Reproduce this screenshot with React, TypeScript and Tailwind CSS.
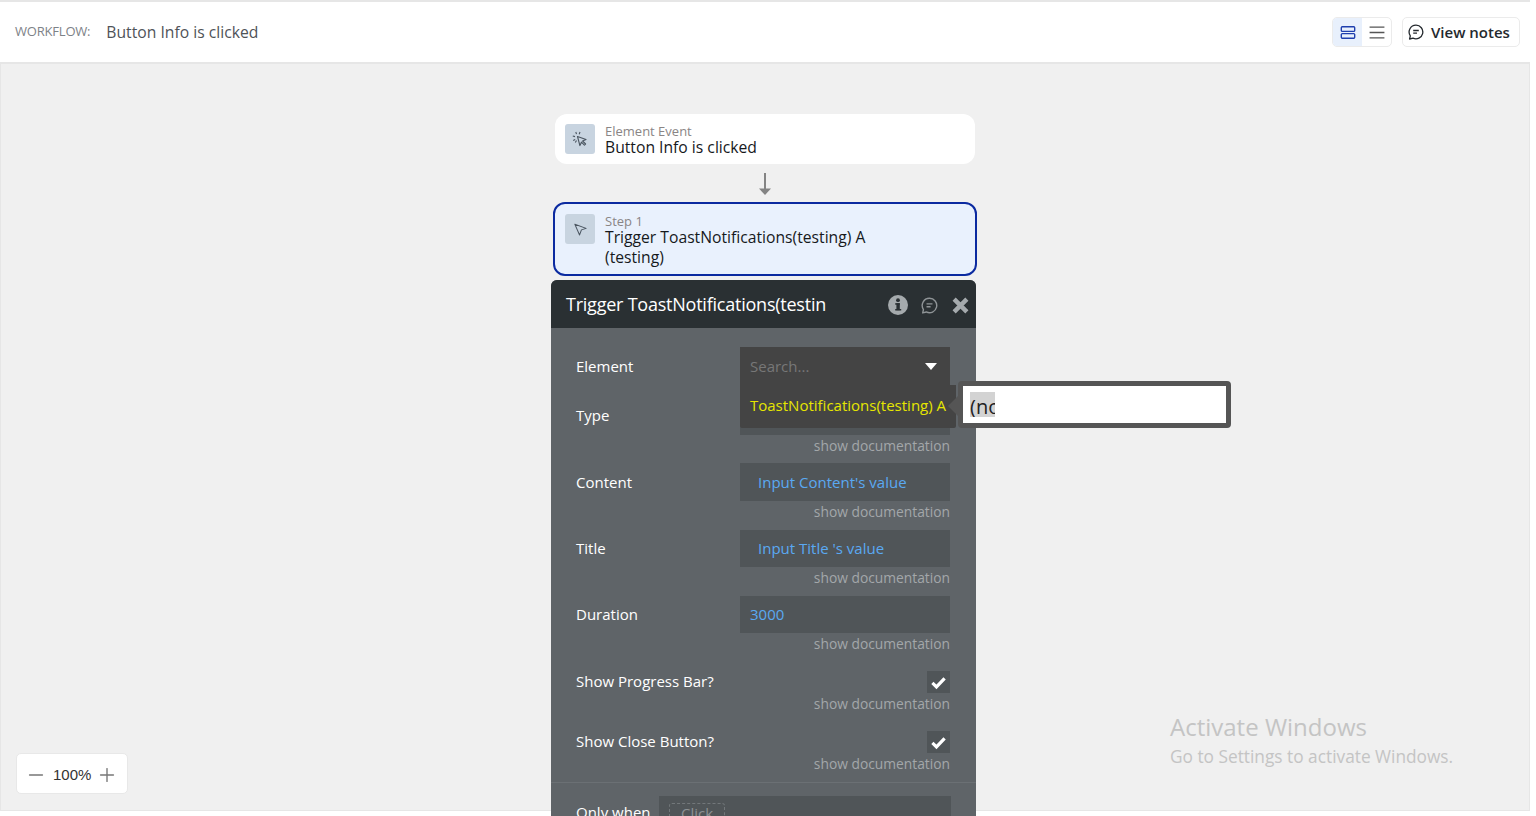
import { Minus, Plus } from 'lucide-react';

function NoteIcon({ className }: { className?: string }) {
  return (
    <svg viewBox="0 0 16 16" fill="none" stroke="currentColor" strokeWidth="1.3" className={className}>
      <path d="M8 1.2a6.8 6.8 0 1 1-3 12.9l-3.4.9.7-3.2A6.8 6.8 0 0 1 8 1.2z" strokeLinejoin="round" />
      <path d="M5.2 6.5h5.6M5.2 9.2h3.8" />
    </svg>
  );
}

function Doc() {
  return <div className="mt-px text-right text-[13.8px] leading-[20px] text-[#a3a7aa]">show documentation</div>;
}

function FieldRow({ label, value, field, mb }: { label: string; value: string; field: string; mb: string }) {
  return (
    <div className={mb}>
      <div className="flex items-center justify-between">
        <span className="text-[15px] text-white">{label}</span>
        <div className={`flex w-[210px] items-center bg-[#505558] text-[15px] text-[#5aa9f2] ${field}`}>{value}</div>
      </div>
      <Doc />
    </div>
  );
}

function CheckRow({ label, mb }: { label: string; mb: string }) {
  return (
    <div className={mb}>
      <div className="flex h-[22px] items-center justify-between">
        <span className="-mt-[2px] text-[15px] text-white">{label}</span>
        <div className="flex h-[22px] w-[23px] items-center justify-center bg-[#505558]">
          <svg viewBox="0 0 16 16" className="h-[15px] w-[15px]" fill="none" stroke="white" strokeWidth="3.4">
            <path d="M1.5 8.5l4.3 4.2L14.5 3.5" />
          </svg>
        </div>
      </div>
      <Doc />
    </div>
  );
}

export default function App() {
  return (
    <div className="h-[816px] w-[1536px] overflow-hidden bg-white font-['Open_Sans',sans-serif]">
      {/* top bar */}
      <header className="flex h-[62px] w-[1530px] items-center border-t-2 border-[#e6e6e6] pl-[15px] pr-[10px]">
        <span className="mr-[16px] text-[13px] tracking-[-0.2px] text-[#7d8287]">WORKFLOW:</span>
        <span className="mt-[2px] text-[15.7px] text-[#4f5358]">Button Info is clicked</span>
        <div className="ml-auto flex items-center gap-[10px]">
          <div className="flex h-[30px] overflow-hidden rounded-[5px] border border-[#ebebeb]">
            <div className="flex w-[29px] items-center justify-center bg-[#e8f0fc] text-[#1f3fae]">
              <svg viewBox="0 0 16 14" className="h-[13px] w-[16px]" fill="none" stroke="currentColor" strokeWidth="1.5">
                <rect x="0.8" y="0.8" width="14.4" height="5" rx="1" />
                <rect x="0.8" y="8.2" width="14.4" height="5" rx="1" />
              </svg>
            </div>
            <div className="flex w-[29px] items-center justify-center text-[#555]">
              <svg viewBox="0 0 16 14" className="h-[13px] w-[16px]" stroke="currentColor" strokeWidth="1.5">
                <path d="M0 1.2h16M0 7h16M0 12.8h16" />
              </svg>
            </div>
          </div>
          <div className="flex h-[30px] w-[118px] items-center gap-[7px] rounded-[5px] border border-[#ebebeb] pl-[5px] text-[15px] font-semibold text-[#24292e]">
            <NoteIcon className="h-[16px] w-[16px]" />
            View notes
          </div>
        </div>
      </header>

      {/* canvas */}
      <main className="relative h-[749px] w-[1530px] border-x border-b border-t-2 border-[#e6e6e6] bg-[#f0f0f0] pl-[550px] pt-[50px]">
        <div className="ml-[4px] flex h-[50px] w-[420px] items-center rounded-[12px] bg-white pl-[10px]">
          <div className="flex h-[30px] w-[30px] items-center justify-center rounded-[3px] bg-[#c8d4e0] text-[#4a5560]">
            <svg viewBox="0 0 16 16" className="h-[16px] w-[16px]" fill="none" stroke="currentColor" strokeWidth="1.1">
              <path d="M5.5 5.5l8.5 3-3.4 1.5 3 3-1.2 1.2-3-3-1.5 3.4z" strokeLinejoin="round" />
              <path d="M3.8 1l.7 2.2M8 1l-.8 2.2M.8 5l2.2.6M1.2 9.5l2-1M4.5 9.5l-1.2 2" />
            </svg>
          </div>
          <div className="ml-[10px] mt-[2px] flex flex-col">
            <span className="text-[13px] leading-[14px] text-[#8a8585]">Element Event</span>
            <span className="text-[15.7px] leading-[18px] font-medium text-[#16191c]">Button Info is clicked</span>
          </div>
        </div>

        <div className="ml-[208px] flex h-[38px] w-[12px] items-center justify-center">
          <svg viewBox="0 0 12 22" className="mt-[2px] h-[22px] w-[12px]" fill="#848484">
            <rect x="5" y="0" width="2" height="18" />
            <path d="M0 15.5h12L6 22z" />
          </svg>
        </div>

        <div className="ml-[2px] flex h-[74px] w-[424px] rounded-[12px] border-2 border-[#0b2aa0] bg-[#e9f1fd] pl-[10px] pt-[10px]">
          <div className="flex h-[30px] w-[30px] items-center justify-center rounded-[3px] bg-[#c8d4e0] text-[#4a5560]">
            <svg viewBox="0 0 16 16" className="h-[15px] w-[15px]" fill="none" stroke="currentColor" strokeWidth="1.1">
              <path d="M2 2.5l12 4.3-5 1.6-2 5.4z" strokeLinejoin="round" />
            </svg>
          </div>
          <div className="ml-[10px] mt-px w-[290px]">
            <div className="text-[13px] leading-[12px] text-[#8a8585]">Step 1</div>
            <div className="text-[15.7px] leading-[20px] font-medium text-[#16191c]">Trigger ToastNotifications(testing) A (testing)</div>
          </div>
        </div>

        {/* property editor */}
        <section className="mt-[4px] h-[560px] w-[425px] overflow-hidden rounded-t-[6px] bg-[#5f6468]">
          <div className="flex h-[48px] items-center bg-[#2a3033] pl-[15px] pr-[7px]">
            <span className="text-[18px] tracking-[-0.23px] text-white">Trigger ToastNotifications(testin</span>
            <div className="ml-auto mt-[2px] flex items-center text-[#a5aaad]">
              <svg viewBox="0 0 20 20" className="h-[20px] w-[20px]">
                <circle cx="10" cy="10" r="10" fill="currentColor" />
                <rect x="8.4" y="8.2" width="3.4" height="7" fill="#2a3033" />
                <rect x="7.2" y="8.2" width="4.6" height="1.5" fill="#2a3033" />
                <rect x="7.2" y="14" width="6" height="1.5" fill="#2a3033" />
                <circle cx="10" cy="5.2" r="1.9" fill="#2a3033" />
              </svg>
              <NoteIcon className="ml-[13px] h-[17px] w-[17px] text-[#8f9497]" />
              <svg viewBox="0 0 16 16" className="ml-[14px] h-[17px] w-[17px]" stroke="currentColor" strokeWidth="4.2">
                <path d="M2 2l12 12M14 2L2 14" />
              </svg>
            </div>
          </div>

          <div className="relative pl-[25px] pr-[26px] pt-[19px]">
            {/* element + type rows sit under the open dropdown */}
            <div className="mb-[12px] flex h-[38px] items-center">
              <span className="text-[15px] text-white">Element</span>
            </div>
            <div className="flex h-[38px] items-center justify-between">
              <span className="-mt-[2px] text-[15px] text-white">Type</span>
              <div className="h-[38px] w-[210px] bg-[#505558]" />
            </div>
            <Doc />
            <div className="h-[7px]" />

            <FieldRow label="Content" value="Input Content's value" field="h-[38px] pl-[18px]" mb="mb-[8px]" />
            <FieldRow label="Title" value="Input Title 's value" field="h-[37px] pl-[18px]" mb="mb-[8px]" />
            <FieldRow label="Duration" value="3000" field="h-[37px] pl-[10px]" mb="mb-[17px]" />
            <CheckRow label="Show Progress Bar?" mb="mb-[17px]" />
            <CheckRow label="Show Close Button?" mb="mb-[8px]" />

            <div className="-ml-[25px] -mr-[26px] border-t border-[#6b7074]" />
            <div className="mt-[13px] flex items-start justify-between">
              <span className="mt-[5px] text-[15px] text-white">Only when</span>
              <div className="mr-[-1px] h-[40px] w-[292px] bg-[#505558] pl-[10px] pt-[7px]">
                <span className="block h-[28px] w-[56px] rounded-[3px] border border-dashed border-[#72777a] pl-[11px] text-[15px] leading-[18px] text-[#8d9194]">Click</span>
              </div>
            </div>

            {/* open dropdown */}
            <div className="absolute left-[189px] top-[19px] w-[216px]">
              <div className="flex h-[38px] w-[210px] items-center justify-between bg-[#444444] pl-[10px] pr-[13px]">
                <span className="text-[15px] text-[#777777]">Search...</span>
                <svg viewBox="0 0 12 7" className="h-[7px] w-[12px]" fill="white"><path d="M0 0h12L6 7z" /></svg>
              </div>
              <div className="flex h-[43px] items-center rounded-b-[2px] bg-[#444444] pb-[2px] pl-[10px] text-[15px] whitespace-nowrap text-[#e6e600]">
                ToastNotifications(testing) A
              </div>
            </div>
          </div>
        </section>

        {/* expression tooltip */}
        <div className="absolute left-[957px] top-[317px] h-[47px] w-[273px] rounded-[4px] border-[5px] border-[#555555] bg-white">
          <div className="absolute -left-[15px] top-[10px] h-0 w-0 border-y-[10px] border-r-[10px] border-y-transparent border-r-[#555555]" />
          <div className="ml-[7px] mt-[6px] h-[25px] w-[25px] overflow-hidden bg-[#d3d3d3] text-[20px] leading-[30px] whitespace-nowrap text-[#222222]">(no</div>
        </div>

        {/* zoom control */}
        <div className="absolute bottom-[16px] left-[15px] flex h-[41px] w-[112px] items-center rounded-[5px] border border-[#e8e8e8] bg-white pl-[8px]">
          <Minus className="mt-[2px] h-[22px] w-[22px] text-[#777777]" strokeWidth={1.5} />
          <span className="ml-[6px] mt-[4px] font-['Liberation_Sans',sans-serif] text-[15px] text-[#333333]">100%</span>
          <Plus className="ml-[5px] mt-[2px] h-[22px] w-[22px] text-[#777777]" strokeWidth={1.5} />
        </div>

        {/* windows watermark */}
        <div className="absolute left-[1169px] top-[647px] text-[#c4c4c4]">
          <div className="text-[24px] leading-[32px]">Activate Windows</div>
          <div className="mt-[2px] text-[17.3px] leading-[24px]">Go to Settings to activate Windows.</div>
        </div>
      </main>
    </div>
  );
}
